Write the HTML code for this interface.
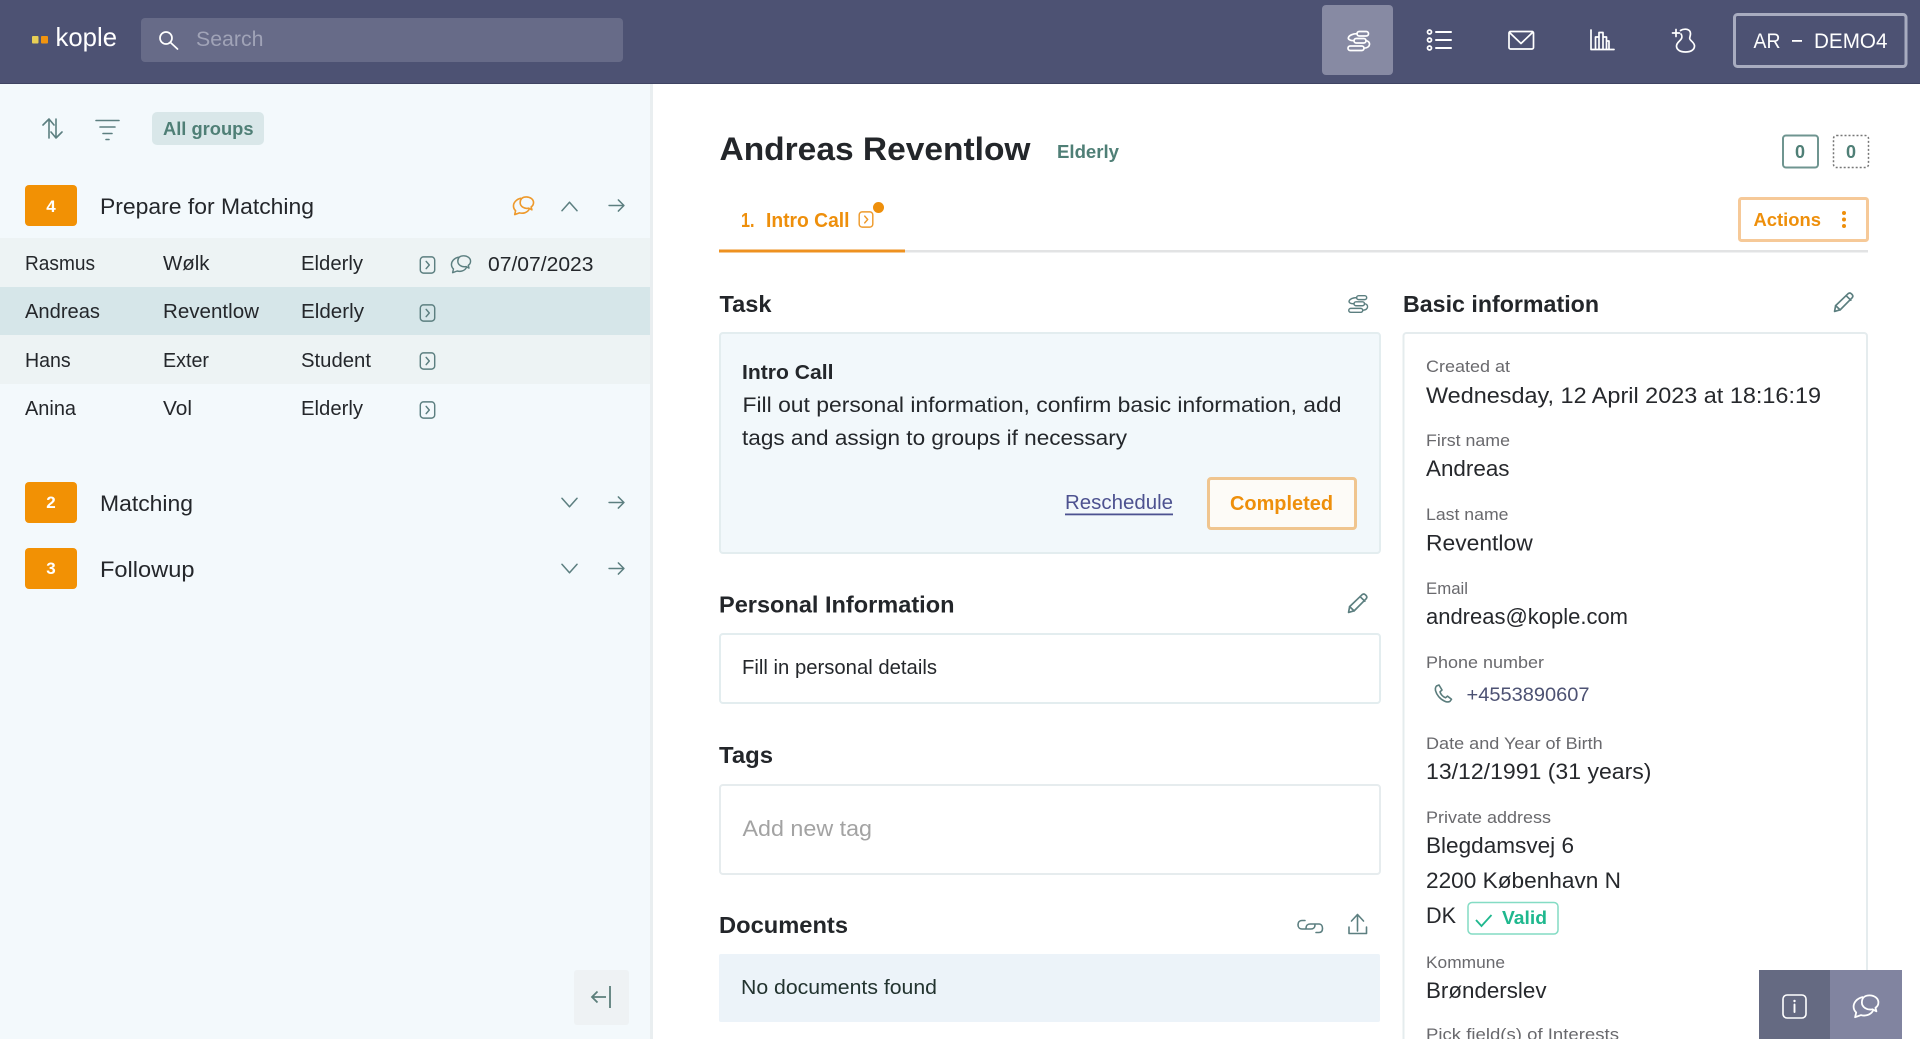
<!DOCTYPE html>
<html lang="en"><head><meta charset="utf-8"><title>kople</title>
<style>
html,body{margin:0;padding:0;background:#fff;width:1920px;height:1039px;overflow:hidden}
svg{display:block}
text{font-family:"Liberation Sans",sans-serif;fill:#24272b}
.b{font-weight:700}
.r{font-size:20px}.h{font-size:23px;font-weight:700;fill:#23262a}
.l{font-size:16.5px;fill:#69696d}.v{font-size:22px;fill:#26282c}
.o{fill:#ee8f0b}.g{fill:#4f7f76}.w{fill:#fff}
.ic{fill:none;stroke:#5c7f80;stroke-width:1.6;stroke-linecap:round;stroke-linejoin:round}
.iw{fill:none;stroke:#fff;stroke-width:1.9;stroke-linecap:round;stroke-linejoin:round}
.io{fill:none;stroke:#ee9a2c;stroke-width:1.7;stroke-linecap:round;stroke-linejoin:round}
</style></head><body>
<svg width="1920" height="1039" viewBox="0 0 1920 1039" xmlns="http://www.w3.org/2000/svg">
<defs>
<symbol id="flow" viewBox="0 0 24 20" overflow="visible"><rect x="11" y="0.500" width="11.500" height="4.500" rx="2.200"/><rect x="8" y="7.500" width="12" height="4.500" rx="2.200"/><rect x="2" y="15" width="16" height="4.500" rx="2.200"/><path d="M11 2.700C2 2.700-1.500 9.700 8 9.700M20 9.700c5 .5 5 7-2 7.500"/></symbol>
<symbol id="chat" viewBox="0 0 24 22" overflow="visible"><path d="M9 3.500C4.500 4.500 1.500 8 1.500 11.500c0 2.200 1 3.800 2.200 5L2.800 20.500l5-1.800c3.500 1 8 0 10-3.500"/><path d="M15 2c4 0 7.500 2.500 7.500 6 0 2-1 3.500-2.500 4.500l.8 3-3.300-1.700C13 14.800 8.500 12 8.500 8S11 2 15 2z"/></symbol>
<symbol id="step" viewBox="0 0 18 20" overflow="visible"><rect x="1" y="1" width="16" height="18" rx="3.500"/><path d="M7.500 6l3.500 4-3.500 4"/></symbol>
<symbol id="pen" viewBox="0 0 20 20" overflow="visible"><path d="M1.500 18.500l1-5.500L14.500 1.500c1-.8 2.200-.6 3 .2l.8.8c.8.9.8 2 0 2.900L6.800 17z"/><path d="M2.500 13l4.300 4M12.500 3.500l4.500 4.300"/></symbol>
<symbol id="right" viewBox="0 0 18 14" overflow="visible"><path d="M1 7h16M11 1l6 6-6 6"/></symbol>
<symbol id="up" viewBox="0 0 18 12" overflow="visible"><path d="M1 11l8-9 8 9"/></symbol>
<symbol id="down" viewBox="0 0 18 12" overflow="visible"><path d="M1 1l8 9 8-9"/></symbol>
</defs>

<!-- top bar -->
<rect width="1920" height="84" fill="#4d5273"/>
<rect y="83" width="1920" height="1" fill="#3f4462"/>
<rect x="32" y="36" width="6.500" height="7.500" rx="1" fill="#e8cf55"/>
<rect x="41" y="36" width="7" height="7.500" rx="1" fill="#f1940f"/>
<text x="55.500" y="46" font-size="26" class="w" textLength="61.500" lengthAdjust="spacingAndGlyphs">kople</text>
<rect x="141" y="18" width="482" height="44" rx="4" fill="#676b88"/>
<g fill="none" stroke="#fff" stroke-width="1.700" stroke-linecap="round"><circle cx="166" cy="38" r="6"/><path d="M170.500 42.500L177.500 49"/></g>
<text x="196" y="46" font-size="21" style="fill:#a0a3b7" textLength="67.500" lengthAdjust="spacingAndGlyphs">Search</text>

<rect x="1322" y="5" width="71" height="70" rx="4" fill="#878aa3"/>
<use href="#flow" x="1346" y="31" width="24" height="20" class="iw" style="stroke-width:1.700"/>
<g class="iw" style="stroke-width:1.700">
<circle cx="1429.500" cy="32" r="2"/><circle cx="1429.500" cy="40" r="2"/><circle cx="1429.500" cy="48" r="2"/>
<path d="M1436 32h15M1436 40h15M1436 48h15" stroke-width="2"/>
<rect x="1509" y="31.500" width="24.500" height="17.500" rx="1.500"/><path d="M1509.500 32.500l11.500 11 11.500-11"/>
<path d="M1591 30v19.500h23M1595.500 49V37h3.500v12M1599 49V32.500h4V49M1603 49V37h3.500v12M1606.500 49V41h2.500v8"/>
<path d="M1676 29.500v7M1672.500 33h7M1680.500 30.500c3-2 8-1.800 9.500 1 1.500 2.800-.5 5-.3 7 .5 2.500 4.800 3.800 4.800 7.500 0 4-4 6-9 6s-9-2-9-6c0-3.500 3.800-5 5-7.500.7-1.500.3-3.500-.5-4.500"/>
</g>
<rect x="1734.500" y="14.500" width="171.500" height="52" rx="3" fill="none" stroke="#a8acc0" stroke-width="3"/>
<text x="1753.500" y="48" font-size="21" class="w" textLength="27" lengthAdjust="spacingAndGlyphs">AR</text>
<rect x="1792" y="40" width="10" height="1.800" fill="#fff"/>
<text x="1814" y="48" font-size="21" class="w" textLength="73.500" lengthAdjust="spacingAndGlyphs">DEMO4</text>

<!-- sidebar -->
<rect y="84" width="650" height="955" fill="#f3f9fc"/>
<rect x="650" y="84" width="3" height="955" fill="#e9eef0"/>
<g class="ic">
<path d="M49 138v-19M43 125l6-6 5 6M56 119v19M51 132l5 6 6-6"/>
<path d="M96 120.500h23M100 127h15M103 133.500h9M106 139.500h3"/>
</g>
<rect x="152" y="112" width="112" height="33" rx="5" fill="#d9e7e9"/>
<text x="163" y="135" font-size="18" class="b g" textLength="90.500" lengthAdjust="spacingAndGlyphs">All groups</text>

<rect x="25" y="185" width="52" height="41" rx="4" fill="#f29104"/>
<text x="51" y="212" font-size="17" class="b w" text-anchor="middle">4</text>
<text x="100" y="214" font-size="22" textLength="214" lengthAdjust="spacingAndGlyphs">Prepare for Matching</text>
<use href="#chat" x="512" y="195" width="23" height="21" class="io"/>
<use href="#up" x="561" y="200" width="17" height="12" class="ic"/>
<use href="#right" x="608" y="199" width="17" height="13" class="ic"/>

<rect y="238" width="650" height="49" fill="#edf3f4"/>
<rect y="287" width="650" height="48" fill="#d6e6e9"/>
<rect y="335" width="650" height="49" fill="#edf3f4"/>

<text x="25" y="270" class="r" textLength="70" lengthAdjust="spacingAndGlyphs">Rasmus</text>
<text x="163" y="270" class="r" textLength="46.500" lengthAdjust="spacingAndGlyphs">Wølk</text>
<text x="301" y="270" class="r" textLength="62" lengthAdjust="spacingAndGlyphs">Elderly</text>
<use href="#step" x="419" y="256" width="17" height="18" class="ic"/>
<use href="#chat" x="450" y="254" width="22" height="20" class="ic"/>
<text x="488" y="271" font-size="20.500" textLength="105.500" lengthAdjust="spacingAndGlyphs">07/07/2023</text>

<text x="25" y="318" class="r" textLength="75" lengthAdjust="spacingAndGlyphs">Andreas</text>
<text x="163" y="318" class="r" textLength="96" lengthAdjust="spacingAndGlyphs">Reventlow</text>
<text x="301" y="318" class="r" textLength="63" lengthAdjust="spacingAndGlyphs">Elderly</text>
<use href="#step" x="419" y="304" width="17" height="18" class="ic"/>

<text x="25" y="367" class="r" textLength="45.700" lengthAdjust="spacingAndGlyphs">Hans</text>
<text x="163" y="367" class="r" textLength="46" lengthAdjust="spacingAndGlyphs">Exter</text>
<text x="301" y="367" class="r" textLength="70" lengthAdjust="spacingAndGlyphs">Student</text>
<use href="#step" x="419" y="352" width="17" height="18" class="ic"/>

<text x="25" y="415" class="r" textLength="51" lengthAdjust="spacingAndGlyphs">Anina</text>
<text x="163" y="415" class="r" textLength="29" lengthAdjust="spacingAndGlyphs">Vol</text>
<text x="301" y="415" class="r" textLength="62" lengthAdjust="spacingAndGlyphs">Elderly</text>
<use href="#step" x="419" y="401" width="17" height="18" class="ic"/>

<rect x="25" y="482" width="52" height="41" rx="4" fill="#f29104"/>
<text x="51" y="508" font-size="17" class="b w" text-anchor="middle">2</text>
<text x="100" y="511" font-size="22" textLength="93" lengthAdjust="spacingAndGlyphs">Matching</text>
<use href="#down" x="561" y="497" width="17" height="12" class="ic"/>
<use href="#right" x="608" y="496" width="17" height="13" class="ic"/>

<rect x="25" y="548" width="52" height="41" rx="4" fill="#f29104"/>
<text x="51" y="574" font-size="17" class="b w" text-anchor="middle">3</text>
<text x="100" y="577" font-size="22" textLength="94.500" lengthAdjust="spacingAndGlyphs">Followup</text>
<use href="#down" x="561" y="563" width="17" height="12" class="ic"/>
<use href="#right" x="608" y="562" width="17" height="13" class="ic"/>

<rect x="574" y="970" width="55" height="55" rx="3" fill="#eef2f4"/>
<path d="M610 986v22M606 997h-14M597.500 991.500l-5.500 5.500 5.500 5.500" fill="none" stroke="#5c7f7b" stroke-width="1.800"/>

<!-- main header -->
<text x="719.500" y="160" font-size="32" class="b" style="fill:#23262a" textLength="311" lengthAdjust="spacingAndGlyphs">Andreas Reventlow</text>
<text x="1057" y="158" font-size="18" class="b g" textLength="62" lengthAdjust="spacingAndGlyphs">Elderly</text>
<rect x="1783" y="135.500" width="35" height="32" rx="3" fill="none" stroke="#6f9590" stroke-width="2"/>
<text x="1800" y="158" font-size="18" class="b g" text-anchor="middle">0</text>
<rect x="1833.500" y="135.500" width="35" height="32" rx="3" fill="none" stroke="#777" stroke-width="1.500" stroke-dasharray="2 2"/>
<text x="1851" y="158" font-size="18" class="b g" text-anchor="middle">0</text>

<text x="741" y="227" font-size="20" class="b o" textLength="13.500" lengthAdjust="spacingAndGlyphs">1.</text>
<text x="766" y="227" font-size="20" class="o" style="font-weight:700" textLength="83.500" lengthAdjust="spacingAndGlyphs">Intro Call</text>
<use href="#step" x="857" y="211" width="18" height="17" class="io"/>
<circle cx="878.500" cy="207.500" r="5.500" fill="#ee8f0b"/>
<rect x="1739.500" y="198.500" width="128" height="42" rx="2" fill="#fff" stroke="#f6c998" stroke-width="3"/>
<text x="1753.500" y="226" font-size="18" class="b o" textLength="67.500" lengthAdjust="spacingAndGlyphs">Actions</text>
<circle cx="1844" cy="213" r="2" fill="#ee8f0b"/><circle cx="1844" cy="219.500" r="2" fill="#ee8f0b"/><circle cx="1844" cy="226" r="2" fill="#ee8f0b"/>
<rect x="905" y="250" width="963" height="2.500" fill="#e2e3e4"/>
<rect x="719" y="249.500" width="186" height="3" fill="#ee9120"/>

<!-- task -->
<text x="719.500" y="312" class="h" textLength="52" lengthAdjust="spacingAndGlyphs">Task</text>
<use href="#flow" x="1347" y="295" width="21" height="18" class="ic"/>
<rect x="720" y="333" width="660" height="220" rx="3" fill="#f2f8fb" stroke="#e3edef" stroke-width="2"/>
<text x="742" y="379" font-size="20" class="b" textLength="91.500" lengthAdjust="spacingAndGlyphs">Intro Call</text>
<text x="742.500" y="412" font-size="21" textLength="599" lengthAdjust="spacingAndGlyphs">Fill out personal information, confirm basic information, add</text>
<text x="742" y="445" font-size="21" textLength="385" lengthAdjust="spacingAndGlyphs">tags and assign to groups if necessary</text>
<text x="1065" y="509" font-size="20" style="fill:#4d5290" textLength="108" lengthAdjust="spacingAndGlyphs">Reschedule</text>
<rect x="1065" y="513.500" width="108" height="1.800" fill="#4d5290"/>
<rect x="1208.500" y="478.500" width="147" height="50" rx="2.500" fill="#fdfbf7" stroke="#f0c58f" stroke-width="3"/>
<text x="1230" y="510" font-size="20" class="b o" textLength="103" lengthAdjust="spacingAndGlyphs">Completed</text>

<!-- personal info -->
<text x="719" y="612.500" class="h" textLength="235.500" lengthAdjust="spacingAndGlyphs">Personal Information</text>
<use href="#pen" x="1347" y="593" width="21" height="21" class="ic"/>
<rect x="720" y="634" width="660" height="69" rx="3" fill="#fff" stroke="#e3edef" stroke-width="2"/>
<text x="742" y="674" class="r" textLength="195" lengthAdjust="spacingAndGlyphs">Fill in personal details</text>

<!-- tags -->
<text x="719" y="763" class="h" textLength="54" lengthAdjust="spacingAndGlyphs">Tags</text>
<rect x="720" y="785" width="660" height="89" rx="3" fill="#fff" stroke="#e6ecee" stroke-width="2"/>
<text x="742.500" y="836" font-size="22" style="fill:#a3a3a3" textLength="129.500" lengthAdjust="spacingAndGlyphs">Add new tag</text>

<!-- documents -->
<text x="719" y="933" class="h" textLength="129" lengthAdjust="spacingAndGlyphs">Documents</text>
<g class="ic">
<path d="M1305 919.500h-3c-2.500 0-4 1.800-4 4.200s1.500 4.300 4 4.300h9c2.500 0 4-1.800 4-4.100M1316 931.500h3c2.500 0 3.500-1.800 3.500-4s-1-4.500-3.500-4.500h-9c-2.500 0-4 1.800-4 4.100" transform="translate(0 1)"/>
<path d="M1357.500 931v-16M1351.500 921l6-6.500 6 6.500M1349 927v6.500h17.500V927"/>
</g>
<rect x="719" y="954" width="661" height="68" rx="2" fill="#ecf3f9"/>
<text x="741" y="994" class="r" style="fill:#22332f" textLength="196" lengthAdjust="spacingAndGlyphs">No documents found</text>

<!-- basic information -->
<text x="1403" y="312" class="h" textLength="196" lengthAdjust="spacingAndGlyphs">Basic information</text>
<use href="#pen" x="1833" y="292" width="21" height="21" class="ic"/>
<rect x="1403.500" y="333" width="463.500" height="720" rx="3" fill="#fff" stroke="#e5ecee" stroke-width="2"/>

<text x="1426" y="372" class="l" textLength="84" lengthAdjust="spacingAndGlyphs">Created at</text>
<text x="1426" y="403" class="v" textLength="395" lengthAdjust="spacingAndGlyphs">Wednesday, 12 April 2023 at 18:16:19</text>
<text x="1426" y="446" class="l" textLength="84" lengthAdjust="spacingAndGlyphs">First name</text>
<text x="1426" y="476" class="v" textLength="83.500" lengthAdjust="spacingAndGlyphs">Andreas</text>
<text x="1426" y="520" class="l" textLength="82.500" lengthAdjust="spacingAndGlyphs">Last name</text>
<text x="1426" y="550.500" class="v" textLength="106.700" lengthAdjust="spacingAndGlyphs">Reventlow</text>
<text x="1426" y="594" class="l" textLength="42" lengthAdjust="spacingAndGlyphs">Email</text>
<text x="1426" y="624" class="v" textLength="202" lengthAdjust="spacingAndGlyphs">andreas@kople.com</text>
<text x="1426" y="668" class="l" textLength="118" lengthAdjust="spacingAndGlyphs">Phone number</text>
<path d="M1436.500 686l2.500-1 3 5-2 1.800c.5 2.500 3 5 5.500 6l2-1.700 4 3.200-1.500 2c-1.500 1-3.500.8-5.500-.2-4.500-2-8-6.500-9-10.500-.3-1.800 0-3.500 1-4.600z" fill="none" stroke="#5a7c7c" stroke-width="1.600" stroke-linejoin="round"/>
<text x="1466.500" y="701" font-size="19.500" style="fill:#4d5273" textLength="123" lengthAdjust="spacingAndGlyphs">+4553890607</text>
<text x="1426" y="749" class="l" textLength="176.700" lengthAdjust="spacingAndGlyphs">Date and Year of Birth</text>
<text x="1426" y="779" class="v" textLength="225.500" lengthAdjust="spacingAndGlyphs">13/12/1991 (31 years)</text>
<text x="1426" y="823" class="l" textLength="125" lengthAdjust="spacingAndGlyphs">Private address</text>
<text x="1426" y="853" class="v" textLength="148" lengthAdjust="spacingAndGlyphs">Blegdamsvej 6</text>
<text x="1426" y="888" class="v" textLength="195" lengthAdjust="spacingAndGlyphs">2200 København N</text>
<text x="1426" y="923" class="v" textLength="30" lengthAdjust="spacingAndGlyphs">DK</text>
<rect x="1468" y="902.500" width="90" height="31.500" rx="4" fill="#fff" stroke="#84dcc4" stroke-width="1.500"/>
<path d="M1476 920l5.500 6 10-11" fill="none" stroke="#1fb88e" stroke-width="1.800"/>
<text x="1502" y="924" font-size="18" class="b" style="fill:#1fb88e" textLength="45" lengthAdjust="spacingAndGlyphs">Valid</text>
<text x="1426" y="968" class="l" textLength="79" lengthAdjust="spacingAndGlyphs">Kommune</text>
<text x="1426" y="998" class="v" textLength="120.500" lengthAdjust="spacingAndGlyphs">Brønderslev</text>
<text x="1426" y="1040" class="l" textLength="193" lengthAdjust="spacingAndGlyphs">Pick field(s) of Interests</text>

<!-- floating buttons -->
<rect x="1759" y="970" width="71" height="69" fill="#656a82"/>
<rect x="1830" y="970" width="72" height="69" fill="#8184a0"/>
<rect x="1783" y="995" width="23" height="23" rx="4" class="iw" style="stroke-width:1.600"/>
<path d="M1794.500 1004.500v7.500" class="iw"/><circle cx="1794.500" cy="1001" r="1.200" fill="#fff"/>
<use href="#chat" x="1850.500" y="993" width="31" height="26" class="iw" style="stroke-width:1.500"/>
</svg>
</body></html>
